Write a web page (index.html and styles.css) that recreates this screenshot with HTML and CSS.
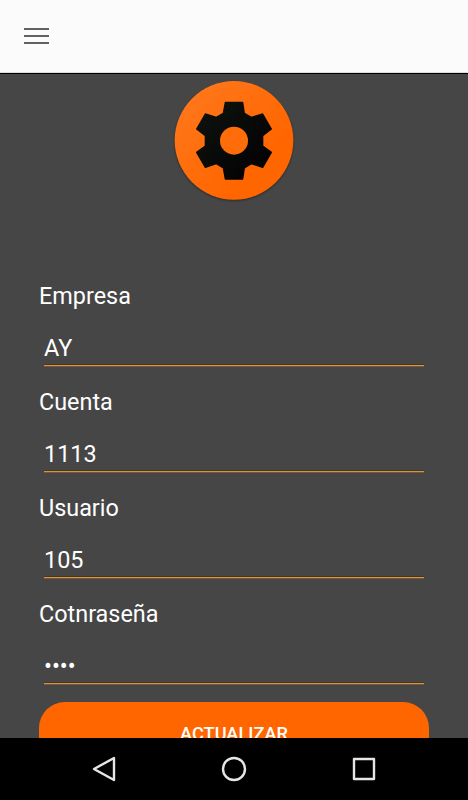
FILE: index.html
```html
<!DOCTYPE html>
<html lang="es">

<head>
    <meta charset="UTF-8">
    <meta name="viewport" content="width=device-width, initial-scale=1">
    <title>Configuración</title>
    <link rel="stylesheet" href="styles.css">
</head>

<body>
    <header class="toolbar">
        <svg class="menu-icon" viewBox="0 0 26 18">
            <path d="M0 2h25M0 9h25M0 16h25" />
        </svg>
    </header>

    <main class="content">
        <svg class="logo" viewBox="30 33 360 360">
            <defs>
                <linearGradient id="disc" x1="0" y1="0" x2="1" y2="1">
                    <stop offset="0" stop-color="#ff7a20" />
                    <stop offset="0.7" stop-color="#ff6600" />
                </linearGradient>
                <linearGradient id="gear" x1="0" y1="0" x2="1" y2="1">
                    <stop offset="0" stop-color="#101310" />
                    <stop offset="1" stop-color="#000" />
                </linearGradient>
            </defs>
            <circle cx="210" cy="211" r="178" fill="url(#disc)" />
            <path class="gear" fill="url(#gear)" stroke="url(#gear)" d="M184 97H236L241 130L262 142L296 132L322 177L296 197V228L322 247L296 292L262 281L241 294L236 327H184L178 294L157 281L124 292L98 247L124 228V197L98 177L124 132L157 142L178 130Z" />
            <circle cx="210" cy="212" r="42" fill="#ff6c0a" />
        </svg>

        <form class="form">
            <label class="field">
                <span class="label">Empresa</span>
                <input type="text" value="AY">
            </label>
            <label class="field">
                <span class="label">Cuenta</span>
                <input type="text" value="1113">
            </label>
            <label class="field">
                <span class="label">Usuario</span>
                <input type="text" value="105">
            </label>
            <label class="field">
                <span class="label">Cotnraseña</span>
                <input type="password" value="1234">
            </label>
            <button type="button" class="submit">ACTUALIZAR</button>
        </form>
    </main>

    <nav class="navbar">
        <svg viewBox="0 0 26 26">
            <path d="M23 2V24L3 13Z" />
        </svg>
        <svg viewBox="0 0 26 26">
            <circle cx="13" cy="13" r="11" />
        </svg>
        <svg viewBox="0 0 26 26">
            <rect x="3" y="3" width="20" height="20" />
        </svg>
    </nav>
</body>

</html>
```

FILE: styles.css
```css
* {
    box-sizing: border-box;
}

body {
    margin: 0;
    height: 100vh;
    display: flex;
    flex-direction: column;
    overflow: hidden;
    background-color: #464646;
    color: #fff;
    font-family: Roboto, sans-serif;
}

.toolbar {
    flex: none;
    height: 74px;
    padding: 27px 24px 0;
    background-color: #fbfbfb;
    border-bottom: 1px solid #000;
    box-shadow: inset 0 -1px #dcdcdc;
}

.menu-icon {
    display: block;
    width: 26px;
    height: 18px;
    stroke: #616161;
    stroke-width: 2.2;
}

.content {
    flex: 1;
    min-height: 0;
    overflow: hidden;
    padding: 7px 39px 0;
}

.logo {
    display: block;
    width: 120px;
    height: 120px;
    margin: 0 auto;
    overflow: visible;
    filter: drop-shadow(0 1px 1px rgba(0, 0, 0, 0.4));
}

.gear {
    stroke-width: 4;
    stroke-linejoin: round;
}

.form {
    margin-top: 76px;
}

.field {
    display: block;
    height: 106px;
    padding-top: 4px;
}

.label {
    display: block;
    font-size: 23.4px;
    line-height: 30px;
}

/* the underline is inset from the label */
.field input {
    display: block;
    width: 380px;
    height: 40px;
    margin: 15px 5px 0;
    padding: 4px 0 0;
    border: 0;
    border-bottom: 1px solid #f98b1c;
    box-shadow: inset 0 -1px #1f4450, 0 1px rgba(180, 95, 50, 0.5);
    outline: 0;
    background: none;
    color: #fff;
    font: 23.4px/30px Roboto, sans-serif;
}

.submit {
    display: block;
    width: 390px;
    height: 63px;
    margin-top: 1px;
    padding: 0;
    border: 0;
    border-radius: 26px;
    background-color: #ff6600;
    color: #fff;
    font: 500 18.2px Roboto, sans-serif;
}

.navbar {
    flex: none;
    display: flex;
    justify-content: center;
    gap: 104px;
    height: 62px;
    padding-top: 18px;
    background-color: #000;
}

.navbar svg {
    width: 26px;
    height: 26px;
    fill: none;
    stroke: #e6e6e6;
    stroke-width: 2.4;
    stroke-linejoin: round;
}
```
